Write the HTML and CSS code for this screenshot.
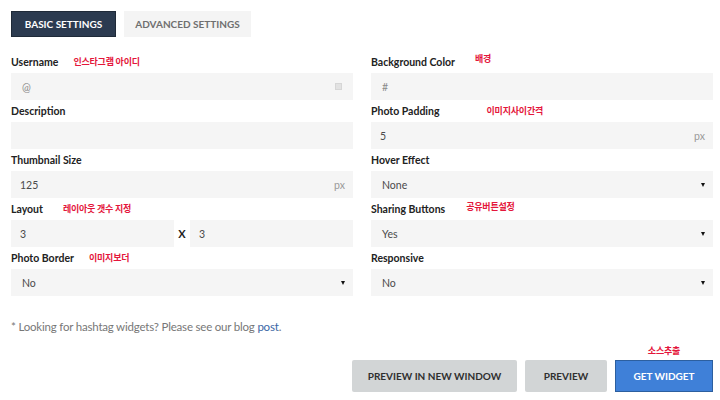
FILE: index.html
```html
<!DOCTYPE html>
<html lang="en">
<head>
<meta charset="utf-8">
<title>Widget settings</title>
<link rel="stylesheet" href="styles.css">
</head>
<body>
<div class="page">
  <div class="tabs">
    <div class="tab tab-active">BASIC SETTINGS</div>
    <div class="tab">ADVANCED SETTINGS</div>
  </div>

  <div class="form">
    <div class="col">
      <div class="field">
        <div class="label">Username<span class="note note-user">인스타그램 아이디</span></div>
        <div class="input"><span class="ph">@</span><span class="chk"></span></div>
      </div>
      <div class="field">
        <div class="label">Description</div>
        <div class="input"></div>
      </div>
      <div class="field">
        <div class="label">Thumbnail Size</div>
        <div class="input"><span class="val">125</span><span class="unit">px</span></div>
      </div>
      <div class="field">
        <div class="label">Layout<span class="note note-layout">레이아웃 갯수 지정</span></div>
        <div class="pair">
          <div class="input"><span class="val">3</span></div>
          <span class="times">X</span>
          <div class="input"><span class="val">3</span></div>
        </div>
      </div>
      <div class="field">
        <div class="label">Photo Border<span class="note note-border">이미지보더</span></div>
        <div class="input select"><span class="val">No</span><span class="caret"></span></div>
      </div>
    </div>

    <div class="col">
      <div class="field">
        <div class="label">Background Color<span class="note note-bg">배경</span></div>
        <div class="input"><span class="ph">#</span></div>
      </div>
      <div class="field">
        <div class="label">Photo Padding<span class="note note-pad">이미지사이간격</span></div>
        <div class="input"><span class="val">5</span><span class="unit">px</span></div>
      </div>
      <div class="field">
        <div class="label">Hover Effect</div>
        <div class="input select"><span class="val">None</span><span class="caret"></span></div>
      </div>
      <div class="field">
        <div class="label">Sharing Buttons<span class="note note-share">공유버튼설정</span></div>
        <div class="input select"><span class="val">Yes</span><span class="caret"></span></div>
      </div>
      <div class="field">
        <div class="label">Responsive</div>
        <div class="input select"><span class="val">No</span><span class="caret"></span></div>
      </div>
    </div>
  </div>

  <p class="hint">* Looking for hashtag widgets? Please see our blog <a href="#" class="link">post</a>.</p>

  <div class="actions">
    <button class="btn btn-gray btn-wide">PREVIEW IN NEW WINDOW</button>
    <button class="btn btn-gray btn-preview">PREVIEW</button>
    <div class="get-wrap">
      <span class="note note-get">소스추출</span>
      <button class="btn btn-blue">GET WIDGET</button>
    </div>
  </div>
</div>
</body>
</html>
```

FILE: styles.css
```css
* { box-sizing: border-box; }
html, body { margin: 0; background: #fff; }
body {
  font-family: Lato, "Noto Sans", "Noto Sans CJK KR", sans-serif;
  color: #222;
  width: 720px;
  height: 400px;
  overflow: hidden;
}
.page { padding: 11px 7px 0 11px; }

.tabs { display: flex; gap: 8px; }
.tab {
  height: 26px;
  width: 127px;
  display: flex;
  align-items: center;
  justify-content: center;
  font-size: 10px;
  font-weight: 700;
  color: #6f6f6f;
  background: #f4f4f4;
}
.tab-active {
  background: #2c3b50;
  color: #fff;
  border: 1px solid #1f2a38;
  width: 105px;
}

.form {
  display: grid;
  grid-template-columns: 342px 342px;
  column-gap: 18px;
  margin-top: 14px;
}
.col { display: flex; flex-direction: column; }
.field { height: 49px; }
.label {
  height: 22px;
  line-height: 22px;
  font-size: 10.5px;
  font-weight: 700;
  color: #222;
  display: flex;
  align-items: center;
}
.note {
  font-family: "Noto Sans CJK KR", sans-serif;
  color: #e4163b;
  font-size: 9px;
  font-weight: 700;
  letter-spacing: -0.2px;
}
.note-user { margin-left: 15px; }
.note-layout { margin-left: 20px; }
.note-border { margin-left: 15px; }
.note-bg { margin-left: 20px; margin-top: -6px; }
.note-pad { margin-left: 47px; }
.note-share { margin-left: 21px; margin-top: -4px; }

.input {
  height: 27px;
  background: #f5f5f5;
  display: flex;
  align-items: center;
  padding: 0 8px 0 9px;
  font-size: 10.5px;
  color: #555;
}
.ph { color: #8a8a8a; padding-left: 2px; }
.val { color: #4a4a4a; }
.select .val { padding-left: 2px; }
.unit { margin-left: auto; color: #9a9a9a; font-size: 10.5px; }
.chk {
  margin-left: auto;
  width: 7px;
  height: 7px;
  background: #e2e2e2;
  border: 1px solid #d6d6d6;
  margin-right: 3px;
}
.caret {
  margin-left: auto;
  width: 0;
  height: 0;
  border-left: 2.5px solid transparent;
  border-right: 2.5px solid transparent;
  border-top: 4px solid #111;
}
.pair { display: flex; align-items: center; }
.pair .input { flex: 1; }
.times {
  width: 16px;
  text-align: center;
  font-size: 11px;
  font-weight: 700;
  color: #222;
}

.hint {
  margin: 23px 0 0 0;
  font-size: 11.5px;
  letter-spacing: -0.2px;
  color: #777;
  line-height: 16px;
}
.link { color: #3b67a5; text-decoration: none; }

.actions {
  display: flex;
  justify-content: flex-end;
  align-items: flex-end;
  gap: 8px;
  margin-top: 9px;
}
.btn {
  height: 32px;
  border: 0;
  font-family: Lato, "Noto Sans", sans-serif;
  font-size: 10px;
  font-weight: 700;
  padding: 0;
}
.btn-gray { background: #d2d5d6; color: #2f2f2f; border-radius: 2px; }
.btn-wide { width: 165px; }
.btn-preview { width: 82px; }
.get-wrap { display: flex; flex-direction: column; align-items: center; gap: 2px; }
.note-get { font-size: 9px; line-height: 14px; }
.btn-blue {
  width: 98px;
  background: #3f80d8;
  color: #fff;
  border: 1px solid #2c5f9f;
}
```
